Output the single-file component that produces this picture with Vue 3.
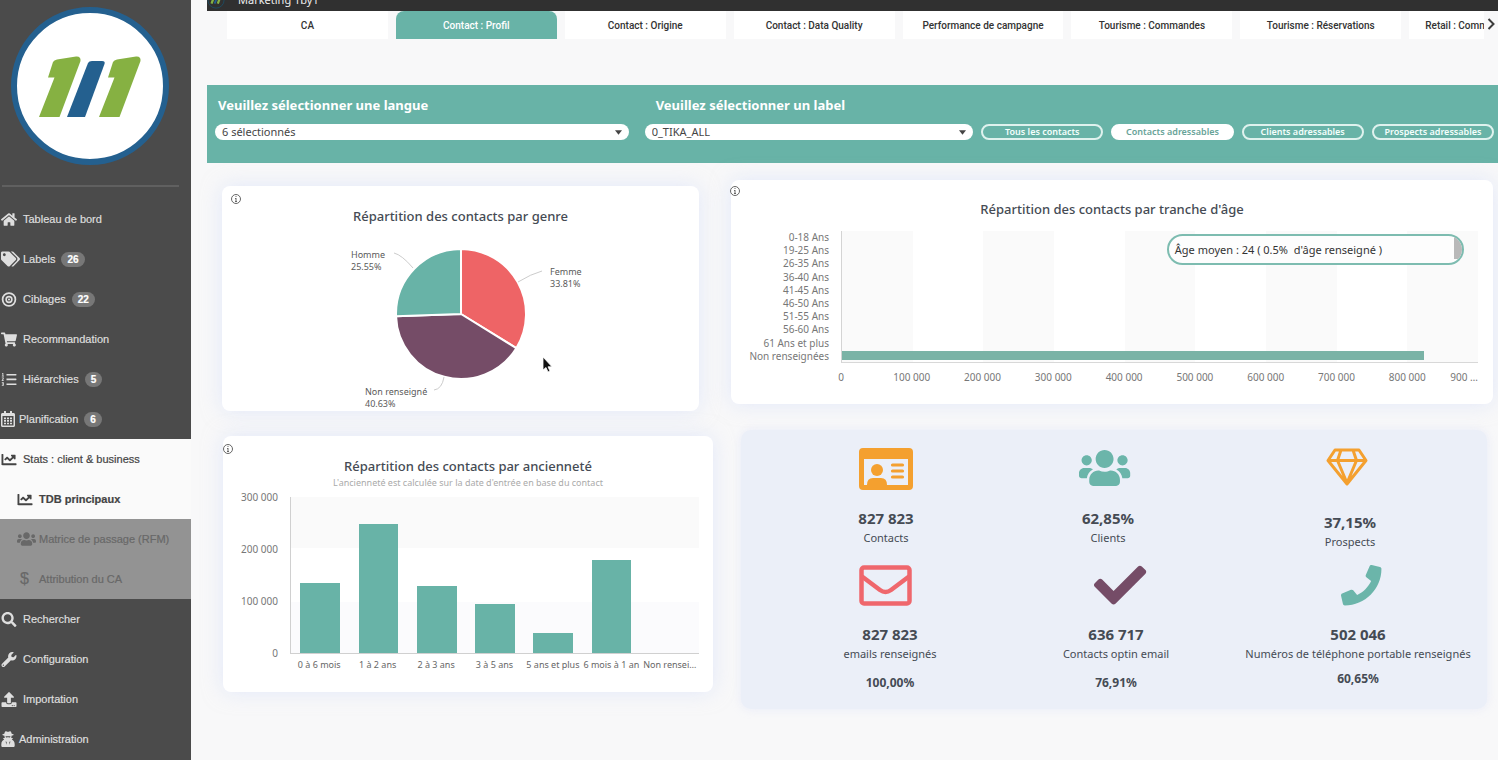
<script setup>
const P = {
  home: 'M280.37 148.26L96 300.11V464a16 16 0 0 0 16 16l112.06-.29a16 16 0 0 0 15.92-16V368a16 16 0 0 1 16-16h64a16 16 0 0 1 16 16v95.64a16 16 0 0 0 16 16.05L464 480a16 16 0 0 0 16-16V300L295.67 148.26a12.19 12.19 0 0 0-15.3 0zM571.6 251.47L488 182.56V44.05a12 12 0 0 0-12-12h-56a12 12 0 0 0-12 12v72.61L318.47 43a48 48 0 0 0-61 0L4.34 251.47a12 12 0 0 0-1.6 16.9l25.5 31A12 12 0 0 0 45.15 301l235.22-193.74a12.19 12.19 0 0 1 15.3 0L530.9 301a12 12 0 0 0 16.9-1.6l25.5-31a12 12 0 0 0-1.7-16.93z',
  tags: 'M497.941 225.941L286.059 14.059A48 48 0 0 0 252.118 0H48C21.49 0 0 21.49 0 48v204.118a48 48 0 0 0 14.059 33.941l211.882 211.882c18.744 18.745 49.136 18.746 67.882 0l204.118-204.118c18.745-18.745 18.745-49.137 0-67.882zM112 160c-26.51 0-48-21.49-48-48s21.49-48 48-48 48 21.49 48 48-21.49 48-48 48zm513.941 133.823L421.823 497.941c-18.745 18.745-49.137 18.745-67.882 0l-.36-.36L527.64 323.522c16.999-16.999 26.362-39.6 26.362-63.64s-9.362-46.641-26.362-63.64L331.397 0h48.721a48 48 0 0 1 33.941 14.059l211.882 211.882c18.745 18.745 18.745 49.137 0 67.882z',
  target: 'M256 8a248 248 0 1 0 0 496 248 248 0 0 0 0-496zm0 60a188 188 0 1 1 0 376 188 188 0 0 1 0-376zm0 62a126 126 0 1 0 0 252 126 126 0 0 0 0-252zm0 56a70 70 0 1 1 0 140 70 70 0 0 1 0-140zm0 34a36 36 0 1 0 0 72 36 36 0 0 0 0-72z',
  cart: 'M528.12 301.319l47.273-208C578.806 78.301 567.391 64 551.99 64H159.208l-9.166-44.81C147.758 8.021 137.93 0 126.529 0H24C10.745 0 0 10.745 0 24v16c0 13.255 10.745 24 24 24h69.883l70.248 343.435C147.325 417.1 136 435.222 136 456c0 30.928 25.072 56 56 56s56-25.072 56-56c0-15.674-6.447-29.835-16.824-40h209.647C430.447 426.165 424 440.326 424 456c0 30.928 25.072 56 56 56s56-25.072 56-56c0-22.172-12.888-41.332-31.579-50.405l5.517-24.276c3.413-15.018-8.002-29.319-23.403-29.319H218.117l-6.545-32h293.145c11.206 0 20.92-7.754 23.403-18.681z',
  list: 'M170 64h326a14 14 0 0 1 14 14v28a14 14 0 0 1-14 14H170zM170 226h326a14 14 0 0 1 14 14v28a14 14 0 0 1-14 14H170zM170 390h326a14 14 0 0 1 14 14v28a14 14 0 0 1-14 14H170zM20 32h42v96h24v28H10v-28h22V62H20zM10 188h66v52l-36 40h38v28H8v-28l36-46v-18H10zM10 352h68v120H10v-28h38v-20H24v-24h24v-20H10z',
  calendar: 'M400 64h-48V12c0-7-5-12-12-12h-40c-7 0-12 5-12 12v52H160V12c0-7-5-12-12-12h-40c-7 0-12 5-12 12v52H48C21 64 0 86 0 112v352c0 26 21 48 48 48h352c26 0 48-22 48-48V112c0-26-22-48-48-48zm-6 400H54c-3 0-6-3-6-6V160h352v298c0 3-3 6-6 6zM96 208h64v56H96zm96 0h64v56h-64zm96 0h64v56h-64zM96 290h64v56H96zm96 0h64v56h-64zm96 0h64v56h-64zM96 372h64v50H96zm96 0h64v50h-64zm96 0h64v50h-64z',
  chart: 'M496 384H64V80c0-8.84-7.16-16-16-16H16C7.16 64 0 71.16 0 80v336c0 17.67 14.33 32 32 32h464c8.84 0 16-7.16 16-16v-32c0-8.84-7.16-16-16-16zM464 96H345.94c-21.38 0-32.09 25.85-16.97 40.97l32.4 32.4L288 242.75l-73.37-73.37c-12.5-12.5-32.76-12.5-45.25 0l-68.69 68.69c-6.25 6.25-6.25 16.38 0 22.63l22.62 22.62c6.25 6.25 16.38 6.25 22.63 0L192 237.25l73.37 73.37c12.5 12.5 32.76 12.5 45.25 0l96-96 32.4 32.4c15.12 15.12 40.97 4.41 40.97-16.97V112c.01-8.84-7.15-16-15.99-16z',
  users: 'M96 224c35.3 0 64-28.7 64-64s-28.7-64-64-64-64 28.7-64 64 28.7 64 64 64zm448 0c35.3 0 64-28.7 64-64s-28.7-64-64-64-64 28.7-64 64 28.7 64 64 64zm32 32h-64c-17.6 0-33.5 7.1-45.1 18.6 40.3 22.1 68.9 62 75.1 109.4h66c17.7 0 32-14.3 32-32v-32c0-35.3-28.7-64-64-64zm-256 0c61.9 0 112-50.1 112-112S381.9 32 320 32 208 82.1 208 144s50.1 112 112 112zm76.8 32h-8.3c-20.8 10-43.9 16-68.5 16s-47.6-6-68.5-16h-8.3C179.6 288 128 339.6 128 403.2V432c0 26.5 21.5 48 48 48h288c26.5 0 48-21.5 48-48v-28.8c0-63.6-51.6-115.2-115.2-115.2zm-223.7-13.4C161.5 263.1 145.6 256 128 256H64c-35.3 0-64 28.7-64 64v32c0 17.7 14.3 32 32 32h65.9c6.3-47.4 34.9-87.3 75.2-109.4z',
  search: 'M505 442.7L405.3 343c-4.5-4.5-10.6-7-17-7H372c27.6-35.3 44-79.7 44-128C416 93.1 322.9 0 208 0S0 93.1 0 208s93.1 208 208 208c48.3 0 92.7-16.4 128-44v16.3c0 6.4 2.5 12.5 7 17l99.7 99.7c9.4 9.4 24.6 9.4 33.9 0l28.3-28.3c9.4-9.4 9.4-24.6.1-34zM208 336c-70.7 0-128-57.2-128-128 0-70.7 57.2-128 128-128 70.7 0 128 57.2 128 128 0 70.7-57.2 128-128 128z',
  wrench: 'M507.73 109.1c-2.24-9.03-13.54-12.09-20.12-5.51l-74.36 74.36-67.88-11.31-11.31-67.88 74.36-74.36c6.62-6.62 3.43-17.9-5.66-20.16-47.38-11.74-99.55.91-136.58 37.93-39.64 39.64-50.55 97.1-34.05 147.2L18.74 402.76c-24.99 24.99-24.99 65.51 0 90.5 24.99 24.99 65.51 24.99 90.5 0l213.21-213.21c50.12 16.71 107.47 5.68 147.37-34.22 37.07-37.07 49.7-89.32 37.91-136.73zM64 472c-13.25 0-24-10.75-24-24 0-13.26 10.75-24 24-24s24 10.74 24 24c0 13.25-10.75 24-24 24z',
  upload: 'M296 384h-80c-13.3 0-24-10.7-24-24V192h-87.7c-17.8 0-26.7-21.5-14.1-34.1L242.3 5.7c7.5-7.5 19.8-7.5 27.3 0l152.2 152.2c12.6 12.6 3.7 34.1-14.1 34.1H320v168c0 13.3-10.7 24-24 24zm216-8v112c0 13.3-10.7 24-24 24H24c-13.3 0-24-10.7-24-24V376c0-13.3 10.7-24 24-24h136v8c0 30.9 25.1 56 56 56h80c30.9 0 56-25.1 56-56v-8h136c13.3 0 24 10.7 24 24zm-124 88c0-11-9-20-20-20s-20 9-20 20 9 20 20 20 20-9 20-20zm64 0c0-11-9-20-20-20s-20 9-20 20 9 20 20 20 20-9 20-20z',
  agent: 'M150 10c-18 0-34 40-44 80-40 8-66 18-66 30 0 14 30 24 72 30v26c0 18 4 34 10 48H60l42 50C50 300 10 350 10 420v52c0 22 18 40 40 40h348c22 0 40-18 40-40v-52c0-70-40-120-92-146l42-50h-62c6-14 10-30 10-48v-26c42-6 72-16 72-30 0-12-26-22-66-30-10-40-26-80-44-80-22 0-40 16-74 16s-52-16-74-16zm-6 158c26 4 134 4 160 0-4 32-20 40-42 40-24 0-28-16-38-16s-14 16-38 16c-22 0-38-8-42-40zm4 160l36 20-14 90zm152 0l-22 110-14-90z',
  check: 'M173.898 439.404l-166.4-166.4c-9.997-9.997-9.997-26.206 0-36.204l36.203-36.204c9.997-9.998 26.207-9.998 36.204 0L192 312.69 432.095 72.596c9.997-9.997 26.207-9.997 36.204 0l36.203 36.204c9.997 9.997 9.997 26.206 0 36.204l-294.4 294.401c-9.998 9.997-26.207 9.997-36.204-.001z',
  phone: 'M493.4 24.6l-104-24c-11.3-2.6-22.9 3.3-27.5 13.9l-48 112c-4.2 9.8-1.4 21.3 6.9 28l60.6 49.6c-36 76.7-98.9 140.5-177.2 177.2l-49.6-60.6c-6.8-8.3-18.2-11.1-28-6.9l-112 48C3.9 366.5-2 378.1.6 389.4l24 104C27.1 504.2 36.7 512 48 512c256.1 0 464-207.5 464-464 0-11.2-7.7-20.9-18.6-23.4z',
}
const nav = [
  { label: 'Tableau de bord', icon: 'home', vb: '0 0 576 512' },
  { label: 'Labels', icon: 'tags', vb: '0 0 640 512', badge: 26, wide: true },
  { label: 'Ciblages', icon: 'target', vb: '0 0 512 512', badge: 22 },
  { label: 'Recommandation', icon: 'cart', vb: '0 0 576 512' },
  { label: 'Hiérarchies', icon: 'list', vb: '0 0 512 512', badge: 5 },
  { label: 'Planification', icon: 'calendar', vb: '0 0 448 512', badge: 6, kind: 'tight' },
  { label: 'Stats : client & business', icon: 'chart', vb: '0 0 512 512', kind: 'open' },
  { label: 'TDB principaux', icon: 'chart', vb: '0 0 512 512', kind: 'open sub current' },
  { label: 'Matrice de passage (RFM)', icon: 'users', vb: '0 0 640 512', kind: 'muted sub', wide: true },
  { label: 'Attribution du CA', kind: 'muted sub' },
  { label: 'Rechercher', icon: 'search', vb: '0 0 512 512' },
  { label: 'Configuration', icon: 'wrench', vb: '0 0 512 512' },
  { label: 'Importation', icon: 'upload', vb: '0 0 512 512' },
  { label: 'Administration', icon: 'agent', vb: '0 0 448 512', kind: 'tight' },
]
const tabs = ['CA', 'Contact : Profil', 'Contact : Origine', 'Contact : Data Quality', 'Performance de campagne', 'Tourisme : Commandes', 'Tourisme : Réservations', 'Retail : Commandes']
const filters = ['Tous les contacts', 'Contacts adressables', 'Clients adressables', 'Prospects adressables']

const cx = 130, cy = 79, r = 65
const pt = (f) => {
  const a = f * 2 * Math.PI
  return `${(cx + r * Math.sin(a)).toFixed(2)} ${(cy - r * Math.cos(a)).toFixed(2)}`
}
const slice = (a, b) => `M${cx} ${cy}L${pt(a)}A${r} ${r} 0 0 1 ${pt(b)}Z`
const slices = [
  { d: slice(0, 0.3381), fill: '#ee6466' },
  { d: slice(0.3381, 0.7445), fill: '#754c67' },
  { d: slice(0.7445, 1), fill: '#68b3a7' },
]

const ages = ['0-18 Ans', '19-25 Ans', '26-35 Ans', '36-40 Ans', '41-45 Ans', '46-50 Ans', '51-55 Ans', '56-60 Ans', '61 Ans et plus', 'Non renseignées']
const ageValues = [0, 0, 0, 0, 0, 0, 0, 0, 0, 823600]
const ageTicks = ['0', '100 000', '200 000', '300 000', '400 000', '500 000', '600 000', '700 000', '800 000']
const seniority = [
  { l: '0 à 6 mois', v: 134000 },
  { l: '1 à 2 ans', v: 248000 },
  { l: '2 à 3 ans', v: 128000 },
  { l: '3 à 5 ans', v: 95000 },
  { l: '5 ans et plus', v: 39000 },
  { l: '6 mois à 1 an', v: 178000 },
  { l: 'Non rensei…', v: 0 },
]
</script>

<template>
  <div class="app">
    <aside class="side">
      <svg class="logo" viewBox="0 0 160 160" role="img" aria-label="1by1">
        <circle cx="79" cy="79" r="76" fill="#fff" stroke="#24608f" stroke-width="6" />
        <g fill="#86b142">
          <path d="M42 55q1-2 4-2.500L65 49.500q5-.5 4.500 4.500L48.500 110H28L43.500 70.500H37z" />
          <path d="M102 55q1-2 4-2.500L125 49.500q5-.5 4.500 4.500L108.500 110H88L103.500 70.500H97z" />
        </g>
        <path fill="#24608f" d="M77 56q1-2 4-2h10q3.500 0 2.500 3L74 110H56z" />
      </svg>
      <hr class="rule" />
      <nav class="nav" aria-label="Menu principal">
        <a v-for="n in nav" :key="n.label" href="#" class="item" :class="n.kind">
          <span class="ico" :class="{ wide: n.wide }">
            <svg v-if="n.icon" :viewBox="n.vb" aria-hidden="true"><path :d="P[n.icon]" fill="currentColor" fill-rule="evenodd" /></svg>
            <span v-else class="dollar">$</span>
          </span>
          <span>{{ n.label }}</span>
          <span v-if="n.badge" class="badge">{{ n.badge }}</span>
        </a>
      </nav>
    </aside>

    <main class="main">
      <header class="top">
        <svg class="toplogo" viewBox="0 0 20 20" aria-hidden="true">
          <circle cx="10" cy="10" r="9" fill="none" stroke="#1d4d63" stroke-width="1" />
          <path d="M5 14l3-8M12 14l3-8" stroke="#86b142" stroke-width="2.500" /><path d="M8.500 14l3-8" stroke="#24608f" stroke-width="2" />
        </svg>
        <span class="brand">Marketing 1by1</span>
      </header>

      <div class="tabbar">
        <div class="tabs">
          <button v-for="(t, i) in tabs" :key="t" type="button" class="tab" :class="{ on: i === 1 }">{{ t }}</button>
        </div>
        <button type="button" class="next" aria-label="Onglets suivants">
          <svg viewBox="0 0 8 12" aria-hidden="true"><path d="M1.500 1L6.500 6l-5 5" fill="none" stroke="#3c3c3c" stroke-width="2" /></svg>
        </button>
      </div>

      <section class="filters">
        <label class="flabel lang" for="lang">Veuillez sélectionner une langue</label>
        <label class="flabel lab" for="label">Veuillez sélectionner un label</label>
        <div class="sel lang">
          <select id="lang"><option>6 sélectionnés</option></select>
          <svg viewBox="0 0 8 5" aria-hidden="true"><path d="M0 0h8L4 5z" fill="#444" /></svg>
        </div>
        <div class="sel">
          <select id="label"><option>0_TIKA_ALL</option></select>
          <svg viewBox="0 0 8 5" aria-hidden="true"><path d="M0 0h8L4 5z" fill="#444" /></svg>
        </div>
        <button v-for="(f, i) in filters" :key="f" type="button" class="pill" :class="{ on: i === 1 }">{{ f }}</button>
      </section>

      <div class="row first">
        <section class="card gender">
          <svg class="info" viewBox="0 0 12 12" aria-hidden="true"><circle cx="6" cy="6" r="4.500" /><path d="M6 5v4M5 5.500h1M5 8.500h2M6 3v1" /></svg>
          <h2>Répartition des contacts par genre</h2>
          <svg class="pie" viewBox="0 0 260 176" role="img" aria-label="Répartition des contacts par genre">
            <path v-for="s in slices" :key="s.fill" :d="s.d" :fill="s.fill" stroke="#fff" stroke-width="2" stroke-linejoin="round" />
            <path d="M63 18q8 2 19 15M187 47q13-8 24-11M113 142q-2 12-10 13" fill="none" stroke="#ccc" />
            <g class="plab">
              <text x="20" y="23">Homme</text><text x="20" y="35">25.55%</text>
              <text x="219" y="40">Femme</text><text x="219" y="52">33.81%</text>
              <text x="34" y="160">Non renseigné</text><text x="34" y="172">40.63%</text>
            </g>
          </svg>
          <svg class="cursor" viewBox="0 0 12 18" aria-hidden="true"><path d="M1 1v13l3-2.500 2 4.500 2-1-2-4.200h4z" fill="#111" stroke="#fff" stroke-width=".8" /></svg>
        </section>

        <section class="card age">
          <svg class="info" viewBox="0 0 12 12" aria-hidden="true"><circle cx="6" cy="6" r="4.500" /><path d="M6 5v4M5 5.500h1M5 8.500h2M6 3v1" /></svg>
          <h2>Répartition des contacts par tranche d'âge</h2>
          <div class="hchart">
            <div class="cats"><span v-for="a in ages" :key="a">{{ a }}</span></div>
            <div class="plot">
              <div class="stripes"><i v-for="n in 9" :key="n"></i></div>
              <div class="hbars"><span v-for="(v, i) in ageValues" :key="i"><b :style="{ width: v / 9000 + '%' }"></b></span></div>
            </div>
            <div class="xaxis">
              <span v-for="(t, i) in ageTicks" :key="t" class="tick" :style="{ left: (i * 100) / 9 + '%' }">{{ t }}</span>
              <span class="cut">900 …</span>
            </div>
          </div>
          <div class="mean"><span>Âge moyen : 24 ( 0.5%&nbsp; d'âge renseigné )</span><i></i></div>
        </section>
      </div>

      <div class="row second">
        <section class="card seniority">
          <svg class="info" viewBox="0 0 12 12" aria-hidden="true"><circle cx="6" cy="6" r="4.500" /><path d="M6 5v4M5 5.500h1M5 8.500h2M6 3v1" /></svg>
          <h2>Répartition des contacts par ancienneté</h2>
          <p class="hint">L'ancienneté est calculée sur la date d'entrée en base du contact</p>
          <div class="vchart">
            <div class="yaxis"><span>300 000</span><span>200 000</span><span>100 000</span><span>0</span></div>
            <div class="vplot"><div v-for="s in seniority" :key="s.l"><b :style="{ height: s.v / 3000 + '%' }"></b></div></div>
            <div class="vlabels"><span v-for="s in seniority" :key="s.l">{{ s.l }}</span></div>
          </div>
        </section>

        <section class="kpis">
          <div class="krow k1">
            <div class="kpi">
              <svg viewBox="0 0 64 44" aria-hidden="true">
                <path fill="#f4a02f" fill-rule="evenodd" d="M9 1h46q4 0 4 4v34q0 4-4 4H9q-4 0-4-4V5q0-4 4-4zm1 11v26h3q0-7 6-7h8q6 0 6 7h21V12z" />
                <circle cx="23" cy="23" r="6" fill="#f4a02f" />
                <path d="M38.500 18h10M38.500 24h10M38.500 30h10" stroke="#f4a02f" stroke-width="3.200" stroke-linecap="round" />
              </svg>
              <strong>827 823</strong><span>Contacts</span>
            </div>
            <div class="kpi">
              <svg viewBox="0 0 64 44" aria-hidden="true"><path transform="translate(3 .5) scale(.08)" fill="#6bb5aa" :d="P.users" /></svg>
              <strong>62,85%</strong><span>Clients</span>
            </div>
            <div class="kpi low">
              <svg viewBox="0 0 64 44" aria-hidden="true">
                <path d="M17 3h24l7 10.500L29 37 10 13.500zM10 13.500h38M23 3l-3.500 10.500L29 36l9.500-22.500L35 3" fill="none" stroke="#f4a02f" stroke-width="3" stroke-linejoin="round" />
              </svg>
              <strong>37,15%</strong><span>Prospects</span>
            </div>
          </div>
          <div class="krow k2">
            <div class="kpi">
              <svg viewBox="0 0 64 44" aria-hidden="true">
                <rect x="3.500" y="4.500" width="48" height="36" rx="2.500" fill="none" stroke="#ef676c" stroke-width="4.500" />
                <path d="M4 13.500L22 27q5.500 4 11 0l18-13.500" fill="none" stroke="#ef676c" stroke-width="4.500" />
              </svg>
              <strong>827 823</strong><span>emails renseignés</span><b>100,00%</b>
            </div>
            <div class="kpi">
              <svg viewBox="0 0 64 44" aria-hidden="true"><path transform="translate(10 -4) scale(.102)" fill="#754c67" :d="P.check" /></svg>
              <strong>636 717</strong><span>Contacts optin email</span><b>76,91%</b>
            </div>
            <div class="kpi">
              <svg viewBox="0 0 64 44" aria-hidden="true"><path transform="translate(15 2) scale(.079)" fill="#6bb5aa" :d="P.phone" /></svg>
              <strong>502 046</strong><span>Numéros de téléphone portable renseignés</span><b class="near">60,65%</b>
            </div>
          </div>
        </section>
      </div>
    </main>
  </div>
</template>

<style>
body { background: #f8f8f9; overflow: hidden; }
</style>

<style scoped>
* { box-sizing: border-box; }
.app { display: flex; min-height: 100vh; font-family: "Noto Sans", "Open Sans", sans-serif; color: #454b54; }
button { font-family: inherit; cursor: pointer; }

.side { flex: 0 0 191px; background: #4b4b4b; font-family: "Liberation Sans", Arial, sans-serif; }
.logo { display: block; width: 160px; margin: 7px 0 0 11px; }
.rule { margin: 18px 12px 12px 2px; border: 0; border-top: 2px solid #606060; }
.nav { display: flex; flex-direction: column; }
.item { display: flex; align-items: center; height: 40px; padding-left: 1px; color: #dedede; font-size: 11px; text-decoration: none; white-space: nowrap; -webkit-text-stroke: .2px currentColor; }
.ico { display: flex; flex: 0 0 22px; }
.ico svg { width: 16px; height: 15px; }
.ico.wide svg { width: 19px; height: 16px; }
.tight .ico { flex-basis: 18px; }
.tight .ico svg { width: 14px; height: 16px; }
.badge { margin-left: 6px; padding: 0 6px; border-radius: 8px; background: #777; color: #fff; font-size: 10px; font-weight: 700; line-height: 15px; }
.open { background: #fafafa; color: #444; }
.sub { padding-left: 17px; }
.current { font-weight: 700; }
.muted { background: #939393; color: #686868; }
.dollar { padding-left: 3px; font-size: 16px; }

.main { flex: 1; min-width: 0; padding-left: 16px; }
.top { display: flex; align-items: flex-end; height: 11px; overflow: hidden; background: #303030; }
.toplogo { flex: none; width: 18px; height: 18px; margin-bottom: 2px; }
.brand { margin: 0 0 3px 13px; color: #eee; font-size: 11px; line-height: 16px; }

.tabbar { display: flex; height: 28px; padding-left: 20px; }
.tabs { display: flex; flex: 1; min-width: 0; gap: 8px; overflow: hidden; }
.tab { flex: 0 0 12.8%; padding: 0; border: 0; background: #fff; color: #333; font-family: Roboto, "Noto Sans", sans-serif; font-size: 10px; font-weight: 500; white-space: nowrap; }
.tab:last-child { padding-left: 16px; text-align: left; }
.tab.on { border-radius: 8px 8px 0 0; background: #68b3a7; color: #fff; }
.next { flex: 0 0 14px; padding: 0; border: 0; background: none; }
.next svg { width: 8px; height: 12px; }

.filters { display: grid; grid-template-columns: 421fr 328fr repeat(4, 122fr); column-gap: 8px; row-gap: 9px; margin-top: 46px; padding: 10px 4px 23px 8px; background: #68b3a7; }
.flabel { padding-left: 3px; color: #fff; font-size: 13px; font-weight: 700; line-height: 20px; }
.flabel.lab { grid-column: 2 / -1; padding-left: 11px; }
.sel { position: relative; min-width: 0; }
.sel.lang { margin-right: 8px; }
.sel select { display: block; width: 100%; height: 16px; padding: 0 7px; border: 0; border-radius: 8px; background: #fff; color: #454545; font: 11px/16px "Noto Sans", sans-serif; appearance: none; }
.sel svg { position: absolute; right: 7px; top: 6px; width: 7px; height: 5px; }
.pill { height: 16px; padding: 0; border: 2px solid #dff2ee; border-radius: 8px; background: none; color: #f4fffc; font-size: 9px; font-weight: 600; line-height: 12px; white-space: nowrap; }
.pill.on { border-color: #fff; background: #fff; color: #68a398; }

.row { display: grid; align-items: start; }
.first { grid-template-columns: 477fr 762fr; gap: 32px; padding: 17px 5px 0 15px; }
.second { grid-template-columns: 490fr 746fr; gap: 28px; padding: 19px 11px 0 16px; }
.card { position: relative; border-radius: 8px; background: #fff; box-shadow: 0 0 20px rgba(205, 218, 250, .5); }
.card h2 { margin: 0; color: #454b54; font-size: 13px; font-weight: 500; line-height: 20px; text-align: center; }
.info { position: absolute; left: 8px; top: 7px; width: 12px; height: 12px; fill: none; stroke: #666; stroke-width: 1; }
.gender { margin-top: 6px; padding-top: 20px; }
.pie { display: block; width: 260px; height: 176px; margin: 9px auto 0; }
.plab { font-size: 9px; fill: #5a5a5a; }
.cursor { position: absolute; left: 320px; top: 170px; width: 12px; height: 18px; }

.age { padding: 19px 15px 13px; }
.age .info { left: -2px; top: 5px; }
.hchart { display: grid; grid-template-columns: 83px 1fr; column-gap: 12px; margin-top: 12px; color: #777; font-size: 10px; }
.cats { display: grid; grid-template-rows: repeat(10, 1fr); text-align: right; white-space: nowrap; line-height: 13px; }
.plot { display: grid; height: 132px; border-left: 1px solid #d4d4d4; border-bottom: 1px solid #d8d8d8; }
.stripes, .hbars { grid-area: 1 / 1; }
.stripes { display: grid; grid-template-columns: repeat(9, 1fr); }
.stripes i:nth-child(odd) { background: #fafafa; }
.hbars { display: grid; grid-template-rows: repeat(10, 1fr); align-items: center; }
.hbars b { display: block; height: 9px; background: #7ab3a6; }
.xaxis { position: relative; grid-column: 2; line-height: 28px; white-space: nowrap; text-align: right; }
.tick { position: absolute; transform: translateX(-50%); }
.mean { position: absolute; right: 29px; top: 54px; display: flex; justify-content: space-between; width: 39%; height: 31px; padding-left: 6px; overflow: hidden; border: 2px solid #7dbcb0; border-radius: 16px; background: #fdfdfd; color: #333; font-size: 11px; line-height: 27px; white-space: nowrap; }
.mean i { width: 8px; height: 23px; background: #b9b9b9; }

.seniority { margin-top: 6px; padding: 20px 14px 20px; }
.seniority .info { left: -1px; }
.hint { margin: 0; color: #aaa; font-size: 9px; line-height: 14px; text-align: center; }
.vchart { display: grid; grid-template-columns: 41px 1fr; column-gap: 12px; margin-top: 7px; color: #777; }
.yaxis { display: flex; flex-direction: column; justify-content: space-between; height: 170px; margin: -7px 0; font-size: 10px; line-height: 14px; text-align: right; white-space: nowrap; }
.vplot { display: grid; grid-template-columns: repeat(7, 1fr); align-items: end; justify-items: center; height: 157px; border-left: 1px solid #d0d0d0; border-bottom: 1px solid #d0d0d0; background: linear-gradient(#fafafa 33%, #fff 33%, #fff 67%, #fbfbfd 67%); }
.vplot div { display: flex; align-items: flex-end; justify-content: center; width: 100%; height: 156px; }
.vplot b { width: 68%; background: #68b3a7; }
.vlabels { grid-column: 2; display: grid; grid-template-columns: repeat(7, 1fr); padding-top: 3px; color: #666; font-size: 9px; line-height: 15px; text-align: center; white-space: nowrap; }

.kpis { padding: 17px 0 17px; border-radius: 10px; background: #ebeff8; box-shadow: 0 0 10px rgba(225, 230, 248, .7); }
.krow { display: grid; align-items: start; text-align: center; color: #454b54; }
.k1 { grid-template-columns: 222fr 222fr 262fr; padding: 0 6px 0 34px; }
.k2 { grid-template-columns: 226fr 226fr 258fr; padding-left: 36px; margin-top: 11px; }
.kpi { display: flex; flex-direction: column; align-items: center; white-space: nowrap; }
.kpi svg { width: 64px; height: 44px; }
.kpi strong { margin-top: 17px; font-size: 15px; line-height: 20px; }
.kpi.low strong { margin-top: 21px; }
.kpi span { font-size: 11px; line-height: 20px; }
.kpi b { margin-top: 10px; font-size: 12px; line-height: 18px; }
.kpi b.near { margin-top: 6px; }
</style>
